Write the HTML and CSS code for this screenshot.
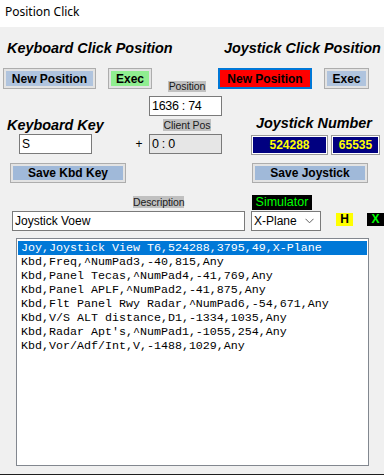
FILE: index.html
```html
<!DOCTYPE html>
<html>
<head>
<meta charset="utf-8">
<title>Position Click</title>
<link rel="stylesheet" href="styles.css">
</head>
<body>
<div class="win">
  <div class="titlebar">Position Click</div>
  <div class="form">
    <div class="row r1">
      <div class="heading h-kbd">Keyboard Click Position</div>
      <div class="heading h-joy">Joystick Click Position</div>
    </div>
    <div class="row r2">
      <div class="btn steel b-newpos"><span>New Position</span></div>
      <div class="btn green b-exec1"><span>Exec</span></div>
      <div class="tag t-pos">Position</div>
      <div class="btn red b-newpos2"><span>New Position</span></div>
      <div class="btn steel b-exec2"><span>Exec</span></div>
    </div>
    <div class="row r3">
      <div class="tbox num t-position">1636 : 74</div>
    </div>
    <div class="row r4">
      <div class="heading h-key">Keyboard Key</div>
      <div class="tag t-client">Client Pos</div>
      <div class="heading h-num">Joystick Number</div>
    </div>
    <div class="row r5">
      <div class="tbox t-key">S</div>
      <div class="plus">+</div>
      <div class="tbox num ro t-clientbox">0 : 0</div>
      <div class="navy n1">524288</div>
      <div class="navy n2">65535</div>
    </div>
    <div class="row r6">
      <div class="btn save b-savekbd"><span>Save Kbd Key</span></div>
      <div class="btn save b-savejoy"><span>Save Joystick</span></div>
    </div>
    <div class="row r7">
      <div class="tag t-desc">Description</div>
      <div class="sim">Simulator</div>
    </div>
    <div class="row r8">
      <div class="tbox t-descbox">Joystick Voew</div>
      <div class="combo">
        <span>X-Plane</span>
        <svg class="chev" width="9" height="6" viewBox="0 0 9 6"><polyline points="0.5,0.8 4.5,4.8 8.5,0.8" fill="none" stroke="#606060" stroke-width="1"/></svg>
      </div>
      <div class="flag fh">H</div>
      <div class="flag fx">X</div>
    </div>
    <div class="list">
      <div class="item sel">Joy,Joystick View T6,524288,3795,49,X-Plane</div>
      <div class="item">Kbd,Freq,^NumPad3,-40,815,Any</div>
      <div class="item">Kbd,Panel Tecas,^NumPad4,-41,769,Any</div>
      <div class="item">Kbd,Panel APLF,^NumPad2,-41,875,Any</div>
      <div class="item">Kbd,Flt Panel Rwy Radar,^NumPad6,-54,671,Any</div>
      <div class="item">Kbd,V/S ALT distance,D1,-1334,1035,Any</div>
      <div class="item">Kbd,Radar Apt's,^NumPad1,-1055,254,Any</div>
      <div class="item">Kbd,Vor/Adf/Int,V,-1488,1029,Any</div>
    </div>
  </div>
</div>
</body>
</html>
```

FILE: styles.css
```css
* { box-sizing: border-box; }
html, body { margin: 0; padding: 0; }
body {
  width: 384px;
  height: 475px;
  overflow: hidden;
  background: #f0f0f0;
  font-family: "Liberation Sans", Arial, sans-serif;
  color: #000;
}
.win {
  height: 475px;
  display: flex;
  flex-direction: column;
  border-bottom: 1px solid #1e1e1e;
}
.titlebar {
  height: 27px;
  flex: none;
  background: #fff;
  font-family: "Noto Sans", "Open Sans", sans-serif;
  font-size: 12px;
  line-height: 16px;
  padding: 4px 0 0 5px;
  color: #000;
}
.form {
  flex: 1;
  display: flex;
  flex-direction: column;
}
.row {
  display: flex;
  align-items: flex-start;
  flex: none;
}
.heading {
  font-weight: bold;
  font-style: italic;
  font-size: 14.4px;
  line-height: 16px;
  white-space: nowrap;
  flex: none;
}
.r1 { margin-top: 13px; }
.h-kbd { margin-left: 7px; width: 217px; }
.h-joy { width: 158px; }

.btn {
  flex: none;
  display: flex;
  align-items: center;
  justify-content: center;
  border: 1px solid #adadad;
  box-shadow: inset 0 0 0 2px #e3e3e3;
  font-weight: bold;
  font-size: 12px;
  white-space: nowrap;
}
.steel { background: #b0c4de; }
.green { background: #90ee90; }
.save { background: #a0b9d9; }
.red {
  background: #ff0000;
  border: 2px solid #0078d7;
  box-shadow: none;
}
.r2 { margin-top: 12px; }
.b-newpos { margin-left: 3px; width: 93px; height: 21px; }
.b-exec1 { margin-left: 12px; width: 44px; height: 21px; }
.t-pos { margin-left: 16px; width: 38px; margin-top: 13px; height: 11px; }
.b-newpos2 { margin-left: 12px; width: 94px; height: 21px; }
.b-exec2 { margin-left: 12px; width: 45px; height: 21px; }

.tag {
  flex: none;
  background: #c0c0c0;
  font-size: 10.5px;
  line-height: 11px;
  text-align: center;
  color: #1a1a1a;
  white-space: nowrap;
  letter-spacing: -0.1px;
}

.tbox {
  flex: none;
  background: #fff;
  border: 1px solid #7a7a7a;
  height: 20px;
  font-size: 12px;
  line-height: 18px;
  padding-left: 2px;
  white-space: nowrap;
}
.tbox.num { font-size: 12.5px; letter-spacing: -0.3px; }
.tbox.ro { background: #e6e6e6; }
.r3 { margin-top: 4px; }
.t-position { margin-left: 149px; width: 73px; }

.h-key { margin-left: 7px; margin-top: 1px; width: 156px; }
.t-client { width: 48px; margin-top: 3px; height: 12px; line-height: 12px; }
.h-num { margin-left: 45px; margin-top: -1px; }

.r5 { margin-top: 1px; }
.t-key { margin-left: 19px; width: 73px; }
.plus {
  flex: none;
  margin-left: 43px;
  width: 8px;
  height: 20px;
  line-height: 20px;
  text-align: center;
  font-size: 12px;
}
.t-clientbox { margin-left: 6px; width: 73px; }
.navy {
  flex: none;
  margin-top: 1px;
  height: 20px;
  background: #000080;
  border: 1px solid #9a9a9a;
  box-shadow: inset 0 0 0 1px #ffffff;
  color: #ffff00;
  font-weight: bold;
  font-size: 12px;
  line-height: 18px;
  text-align: center;
}
.n1 { margin-left: 29px; width: 77px; }
.n2 { margin-left: 3px; width: 49px; }

.r6 { margin-top: 8px; }
.b-savekbd { margin-left: 10px; width: 116px; height: 20px; }
.b-savejoy { margin-left: 126px; width: 116px; height: 20px; }

.r7 { margin-top: 0; }
.t-desc { margin-left: 133px; width: 51px; margin-top: 13px; height: 12px; line-height: 12px; }
.sim {
  flex: none;
  margin-left: 68px;
  margin-top: 12px;
  width: 60px;
  height: 15px;
  background: #000;
  color: #00ff00;
  font-size: 12.5px;
  line-height: 15px;
  text-align: center;
}

.r8 { margin-top: 1px; }
.t-descbox { margin-left: 12px; width: 233px; }
.combo {
  flex: none;
  margin-left: 6px;
  width: 70px;
  height: 20px;
  background: #fff;
  border: 1px solid #7a7a7a;
  display: flex;
  align-items: center;
  justify-content: space-between;
  padding: 0 6px 0 2px;
  font-size: 12px;
}
.chev { display: block; }
.flag {
  flex: none;
  margin-top: 2px;
  width: 17px;
  height: 13px;
  font-weight: bold;
  font-size: 12px;
  line-height: 13px;
  text-align: center;
}
.fh { margin-left: 15px; background: #ffff00; color: #000; }
.fx { margin-left: 14px; background: #000; color: #00ff00; }

.list {
  flex: none;
  margin: 7px 0 0 16px;
  width: 353px;
  height: 228px;
  background: #fff;
  border: 1px solid #82878f;
  padding: 2px 1px 0 1px;
}
.item {
  height: 14px;
  line-height: 14px;
  padding-left: 3px;
  font-family: "Liberation Mono", "Courier New", monospace;
  font-size: 11.67px;
  white-space: nowrap;
  color: #000;
}
.item.sel { background: #0078d7; color: #fff; }
```
